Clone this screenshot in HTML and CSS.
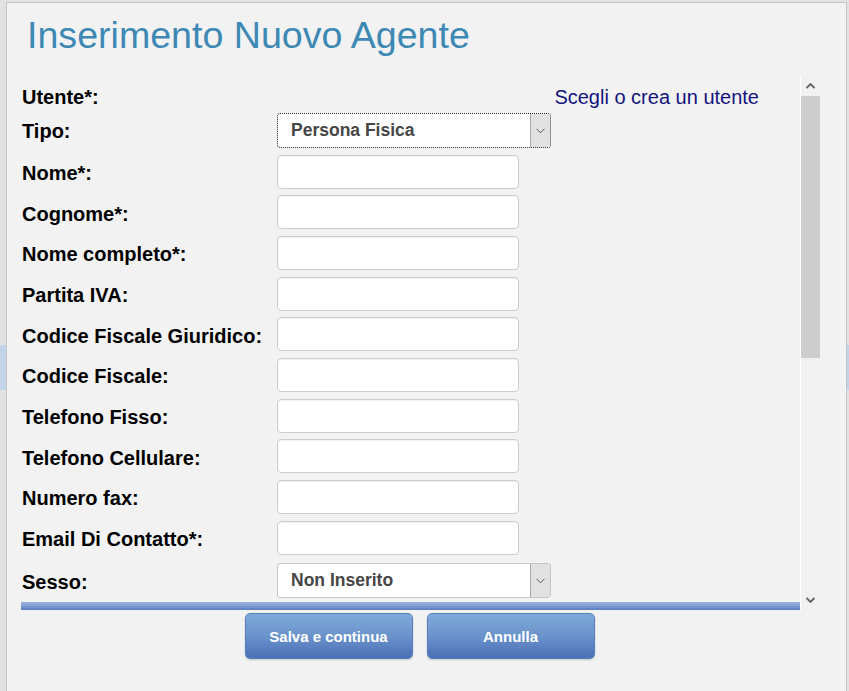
FILE: index.html
```html
<!DOCTYPE html>
<html lang="it">
<head>
<meta charset="utf-8">
<title>Inserimento Nuovo Agente</title>
<link rel="stylesheet" href="styles.css">
</head>
<body>
<div class="modal">
  <h1 class="title">Inserimento Nuovo Agente</h1>
  <div class="scroll-area">
    <div class="scroll-content">
      <div class="fields">
        <div class="row-user">
          <span class="label">Utente*:</span>
          <a class="user-link" href="#">Scegli o crea un utente</a>
        </div>
        <div class="form-grid">
          <label class="label">Tipo:</label>
          <div class="select focused"><span class="select-text">Persona Fisica</span><span class="select-arrow"><svg width="9" height="6" viewBox="0 0 9 6"><path d="M0.5 0.8 L4.5 4.8 L8.5 0.8" fill="none" stroke="#555" stroke-width="1"/></svg></span></div>
          <label class="label">Nome*:</label><div class="input"></div>
          <label class="label">Cognome*:</label><div class="input"></div>
          <label class="label">Nome completo*:</label><div class="input"></div>
          <label class="label">Partita IVA:</label><div class="input"></div>
          <label class="label">Codice Fiscale Giuridico:</label><div class="input"></div>
          <label class="label">Codice Fiscale:</label><div class="input"></div>
          <label class="label">Telefono Fisso:</label><div class="input"></div>
          <label class="label">Telefono Cellulare:</label><div class="input"></div>
          <label class="label">Numero fax:</label><div class="input"></div>
          <label class="label">Email Di Contatto*:</label><div class="input"></div>
          <label class="label label-last">Sesso:</label>
          <div class="select select-last"><span class="select-text">Non Inserito</span><span class="select-arrow"><svg width="9" height="6" viewBox="0 0 9 6"><path d="M0.5 0.8 L4.5 4.8 L8.5 0.8" fill="none" stroke="#555" stroke-width="1"/></svg></span></div>
        </div>
      </div>
      <div class="blue-bar"></div>
    </div>
    <div class="scrollbar">
      <div class="sb-btn"><svg width="9" height="6" viewBox="0 0 9 6"><path d="M0.5 5 L4.5 1 L8.5 5" fill="none" stroke="#606060" stroke-width="1.8"/></svg></div>
      <div class="sb-track"><div class="sb-thumb"></div></div>
      <div class="sb-btn"><svg width="9" height="6" viewBox="0 0 9 6"><path d="M0.5 1 L4.5 5 L8.5 1" fill="none" stroke="#606060" stroke-width="1.8"/></svg></div>
    </div>
  </div>
  <div class="actions">
    <button class="btn">Salva e continua</button>
    <button class="btn">Annulla</button>
  </div>
</div>
</body>
</html>
```
FILE: styles.css
```css
html, body {
  margin: 0;
  padding: 0;
}
body {
  background: linear-gradient(to bottom, #e2e2e2 0, #e2e2e2 345px, #c3d3e8 345px, #c3d3e8 390px, #e2e2e2 390px);
  font-family: "Liberation Sans", Arial, sans-serif;
  overflow: hidden;
  height: 691px;
}
.modal {
  margin: 2px 0 0 6px;
  width: 839px;
  height: 720px;
  border: 1px solid #c4c4c4;
  background: #f2f2f2;
  box-sizing: content-box;
}
.title {
  margin: 0;
  padding: 11px 0 0 20px;
  font-size: 37.6px;
  font-weight: normal;
  line-height: 43px;
  color: #3d89b4;
}
.scroll-area {
  margin: 19px 0 0 14px;
  width: 799px;
  height: 534px;
  display: flex;
}
.scroll-content {
  width: 779px;
  display: flex;
  flex-direction: column;
}
.fields {
  flex: 1;
  overflow: hidden;
  padding-top: 9px;
}
.row-user {
  display: flex;
  align-items: center;
  height: 24px;
  margin-bottom: 4px;
}
.label {
  font-size: 20px;
  font-weight: bold;
  color: #000;
  line-height: 23px;
  padding-left: 1px;
}
.form-grid .label {
  padding-top: 4px;
}
.form-grid .label:first-child {
  padding-top: 2px;
}
.user-link {
  margin-left: auto;
  margin-right: 41px;
  color: #14147f;
  text-decoration: none;
  font-size: 20px;
  line-height: 23px;
}
.form-grid {
  display: grid;
  grid-template-columns: 256px auto;
  grid-auto-rows: auto;
  row-gap: 6.67px;
  align-items: center;
  justify-items: start;
}
.input {
  width: 242px;
  height: 34px;
  box-sizing: border-box;
  background: #fff;
  border: 1px solid #cccccc;
  border-radius: 4px;
  box-shadow: inset 0 1px 1px rgba(0,0,0,0.06);
}
.select {
  width: 274px;
  height: 35px;
  box-sizing: border-box;
  background: #fff;
  border: 1px solid #c6c6c6;
  border-radius: 3px;
  display: flex;
  align-items: stretch;
  margin: 0;
}
.select-last {
  margin: 2px 0 0 0;
}
.label-last {
  margin-top: 2px;
}
.select.focused {
  border: 1px dotted #222;
}
.select-text {
  flex: 1;
  padding-left: 13px;
  font-size: 17.5px;
  font-weight: bold;
  color: #464646;
  line-height: 32px;
}
.select-arrow {
  width: 19px;
  background: #e1e1e1;
  border-left: 1px solid #a9a9a9;
  display: flex;
  align-items: center;
  justify-content: center;
  border-radius: 0 2px 2px 0;
}
.blue-bar {
  height: 8px;
  background: linear-gradient(to bottom, #9db4dc 0, #86a3d4 40%, #6f8fcb 70%, #5a7bbd 100%);
}
.scrollbar {
  width: 19px;
  display: flex;
  flex-direction: column;
  background: #f1f1f1;
  border-left: 1px solid #ffffff;
}
.sb-btn {
  height: 20px;
  display: flex;
  align-items: center;
  justify-content: center;
  background: #f1f1f1;
}
.sb-track {
  flex: 1;
}
.sb-thumb {
  height: 262px;
  background: #cdcdcd;
}
.actions {
  display: flex;
  justify-content: center;
  gap: 14px;
  margin: 3px 0 0 13px;
  width: 799px;
}
.btn {
  width: 168px;
  height: 46px;
  border: 1px solid #5a7fbe;
  border-radius: 5px;
  background: linear-gradient(to bottom, #7eaad8 0, #6a93cb 50%, #4b6fb7 100%);
  color: #fff;
  font-family: "Liberation Sans", Arial, sans-serif;
  font-size: 15px;
  font-weight: bold;
  box-shadow: 0 1px 2px rgba(0,0,0,0.2);
  padding: 0;
  cursor: pointer;
}
```
